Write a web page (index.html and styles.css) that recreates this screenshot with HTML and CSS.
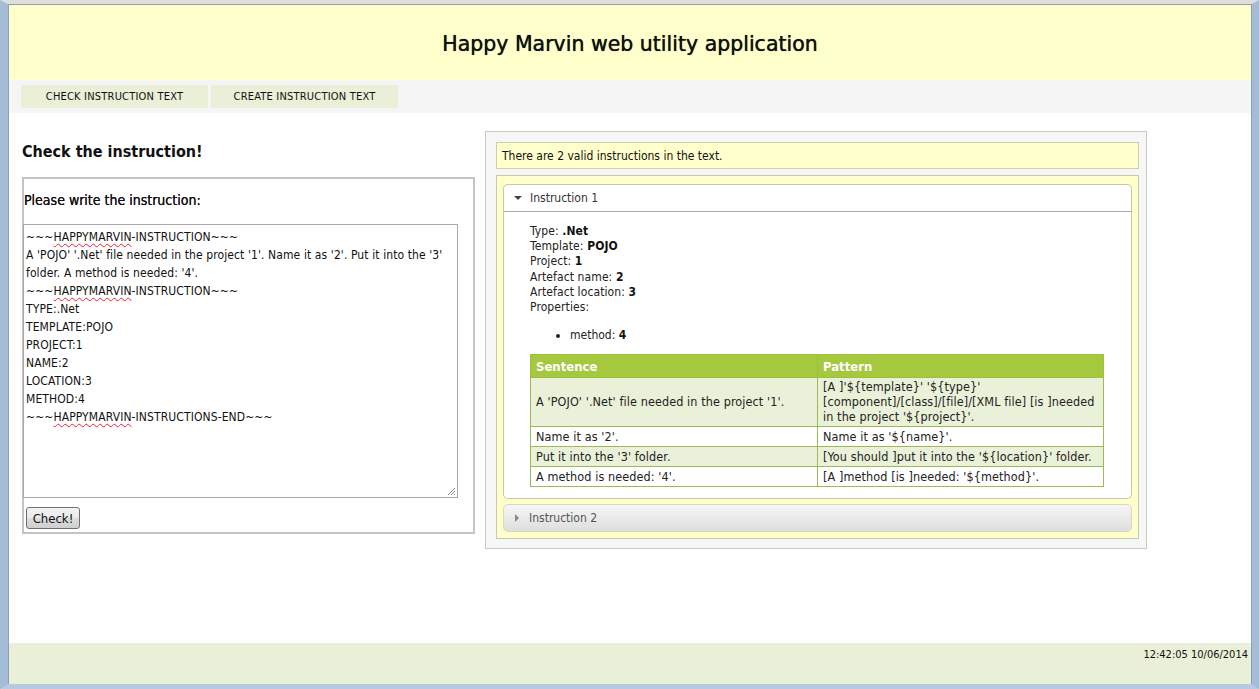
FILE: index.html
```html
<!DOCTYPE html>
<html>
<head>
<meta charset="utf-8">
<link rel="stylesheet" href="styles.css">
</head>
<body>
<div class="frame">
  <div class="page">
    <header class="header"><h1>Happy Marvin web utility application</h1></header>
    <nav class="nav">
      <a class="tab">CHECK INSTRUCTION TEXT</a>
      <a class="tab">CREATE INSTRUCTION TEXT</a>
    </nav>
    <main class="main">
      <section class="left">
        <h2 class="title">Check the instruction!</h2>
        <div class="fieldset">
          <div class="label">Please write the instruction:</div>
          <div class="textarea">
            <div><span class="sp">~~~<u>HAPPYMARVIN</u>-INSTRUCTION~~~</span></div>
            <div>A 'POJO' '.Net' file needed in the project '1'. Name it as '2'. Put it into the '3' folder. A method is needed: '4'.</div>
            <div><span class="sp">~~~<u>HAPPYMARVIN</u>-INSTRUCTION~~~</span></div>
            <div>TYPE:.Net</div>
            <div>TEMPLATE:POJO</div>
            <div>PROJECT:1</div>
            <div>NAME:2</div>
            <div>LOCATION:3</div>
            <div>METHOD:4</div>
            <div><span class="sp">~~~<u>HAPPYMARVIN</u>-INSTRUCTIONS-END~~~</span></div>
            <svg class="grip" width="9" height="9" viewBox="0 0 9 9"><path d="M8 1 L1 8 M8 4 L4 8 M8 7 L7 8" stroke="#888" stroke-width="1"/></svg>
          </div>
          <button class="btn">Check!</button>
        </div>
      </section>
      <section class="right">
        <div class="msg">There are 2 valid instructions in the text.</div>
        <div class="results">
          <div class="acc-head open"><span class="tri-down"></span>Instruction 1</div>
          <div class="acc-body">
            <div class="props">
              <div>Type: <b>.Net</b></div>
              <div>Template: <b>POJO</b></div>
              <div>Project: <b>1</b></div>
              <div>Artefact name: <b>2</b></div>
              <div>Artefact location: <b>3</b></div>
              <div>Properties:</div>
            </div>
            <ul class="plist"><li>method: <b>4</b></li></ul>
            <table class="tbl">
              <thead><tr><th class="c1">Sentence</th><th>Pattern</th></tr></thead>
              <tbody>
                <tr class="alt"><td>A 'POJO' '.Net' file needed in the project '1'.</td><td>[A ]'${template}' '${type}' [component]/[class]/[file]/[XML file] [is ]needed in the project '${project}'.</td></tr>
                <tr><td>Name it as '2'.</td><td>Name it as '${name}'.</td></tr>
                <tr class="alt"><td>Put it into the '3' folder.</td><td>[You should ]put it into the '${location}' folder.</td></tr>
                <tr><td>A method is needed: '4'.</td><td>[A ]method [is ]needed: '${method}'.</td></tr>
              </tbody>
            </table>
          </div>
          <div class="acc-head closed"><span class="tri-right"></span>Instruction 2</div>
        </div>
      </section>
    </main>
    <footer class="footer">12:42:05 10/06/2014</footer>
  </div>
</div>
</body>
</html>
```
FILE: styles.css
```css
* { box-sizing: border-box; }
html, body { margin: 0; padding: 0; }
body {
  width: 1259px;
  height: 689px;
  overflow: hidden;
  font-family: "DejaVu Sans Condensed", "DejaVu Sans", sans-serif;
  font-size: 12px;
  color: #222;
  background: #a9bfd8;
}
.frame {
  height: 689px;
  border-left: 8px solid #a4bcd6;
  border-right: 7px solid #a4bcd6;
  border-top: 4px solid #dedede;
  border-bottom: 5px solid #b6cbe2;
}
.page {
  height: 100%;
  display: flex;
  flex-direction: column;
  background: #fff;
  border-top: 1px solid #9a9a9a;
  border-left: 1px solid #8aa0b8;
  border-right: 1px solid #8aa0b8;
}
.header {
  height: 75px;
  background: #ffffcc;
  display: flex;
  align-items: center;
  justify-content: center;
  padding-top: 2px;
}
.header h1 {
  margin: 0;
  font-family: "DejaVu Sans", sans-serif;
  font-size: 20.5px;
  font-weight: normal;
  color: #111;
  text-shadow: 0 0 0.7px #111;
}
.nav {
  height: 33px;
  background: #f5f5f5;
  display: flex;
  gap: 3px;
  padding: 5px 0 0 12px;
}
.tab {
  width: 187px;
  height: 23px;
  background: #eaefd8;
  display: flex;
  align-items: center;
  justify-content: center;
  font-size: 11px;
  color: #111;
  letter-spacing: 0.2px;
}
.main {
  flex: 1;
  display: flex;
  align-items: flex-start;
  padding: 0 0 0 13px;
  gap: 10px;
}
.left { width: 453px; }
.title {
  margin: 29px 0 16px 0;
  font-size: 16px;
  font-weight: bold;
  color: #111;
  line-height: 19px;
}
.fieldset {
  border: 2px solid #c4c4c4;
  height: 357px;
  padding: 0;
}
.label {
  font-size: 14px;
  color: #111;
  padding: 13px 0 0 0;
  height: 45px;
  text-shadow: 0 0 0.4px #111;
}
.textarea {
  position: relative;
  width: 435px;
  height: 274px;
  border: 1px solid #a9a9a9;
  margin-left: -1px;
  padding: 3px 2px;
  font-size: 12px;
  line-height: 18px;
  color: #111;
  letter-spacing: 0.1px;
}
.sp u {
  text-decoration: underline wavy #e23;
  text-decoration-thickness: 1px;
  text-underline-offset: 2px;
}
.grip { position: absolute; right: 1px; bottom: 1px; }
.btn {
  margin: 9px 0 0 2px;
  width: 54px;
  height: 22px;
  font-family: inherit;
  font-size: 13px;
  color: #111;
  border: 1px solid #707070;
  border-radius: 3px;
  background: linear-gradient(#f2f2f2, #ebebeb 50%, #dddddd 50%, #cfcfcf);
  padding: 0;
}
.right {
  margin-top: 18px;
  width: 662px;
  height: 418px;
  border: 1px solid #c8c8c8;
  background: #f7f7f7;
  padding: 10px 7px 9px 10px;
  display: flex;
  flex-direction: column;
  gap: 6px;
}
.msg {
  height: 28px;
  background: #ffffcc;
  border: 1px solid #cfcfb0;
  padding: 0 5px;
  display: flex;
  align-items: center;
  color: #111;
}
.results {
  flex: 1;
  background: #ffffcc;
  border: 1px solid #c8c8b0;
  padding: 8px 6px 6px 6px;
}
.acc-head {
  height: 28px;
  display: flex;
  align-items: center;
  padding-left: 10px;
  gap: 8px;
  color: #333;
  border: 1px solid #c6c6a6;
}
.acc-head.open {
  background: #fff;
  border-radius: 5px 5px 0 0;
  border-bottom-color: #aaa;
}
.acc-head.closed {
  margin-top: 5px;
  border-radius: 5px;
  color: #555;
  border-color: #d8d8c0;
  background: linear-gradient(#f6f6f6, #e9e9e9 55%, #dedede 100%);
}
.tri-down {
  width: 0; height: 0;
  border-left: 4px solid transparent;
  border-right: 4px solid transparent;
  border-top: 4px solid #444;
}
.tri-right {
  width: 0; height: 0;
  border-top: 4px solid transparent;
  border-bottom: 4px solid transparent;
  border-left: 4px solid #888;
  margin-left: 1px;
  margin-right: 2px;
}
.acc-body {
  background: #fff;
  border: 1px solid #c6c6a6;
  border-top: none;
  border-radius: 0 0 5px 5px;
  padding: 12px 27px 11px 26px;
  height: 287px;
}
.props { line-height: 15.2px; color: #222; letter-spacing: 0.1px; }
.props b, .plist b { color: #111; }
.plist {
  margin: 13px 0 11px 0;
  padding-left: 40px;
  line-height: 15px;
}
.tbl {
  width: 574px;
  border-collapse: collapse;
  font-size: 12.5px;
  color: #222;
}
.tbl th {
  background: #a6c83f;
  color: #fff;
  text-align: left;
  font-weight: bold;
  font-size: 13px;
  height: 23px;
  padding: 0 5px;
  border: 1px solid #9ec03a;
}
.tbl th.c1 { width: 287px; }
.tbl td {
  border: 1px solid #9cba55;
  padding: 1px 5px 2px 5px;
  line-height: 15px;
  height: 20px;
  letter-spacing: 0.1px;
}
.tbl tr.alt td { background: #eaf1d9; }
.footer {
  height: 41px;
  background: #eaefd8;
  text-align: right;
  padding: 5px 3px 0 0;
  font-size: 11px;
  color: #111;
}
```
